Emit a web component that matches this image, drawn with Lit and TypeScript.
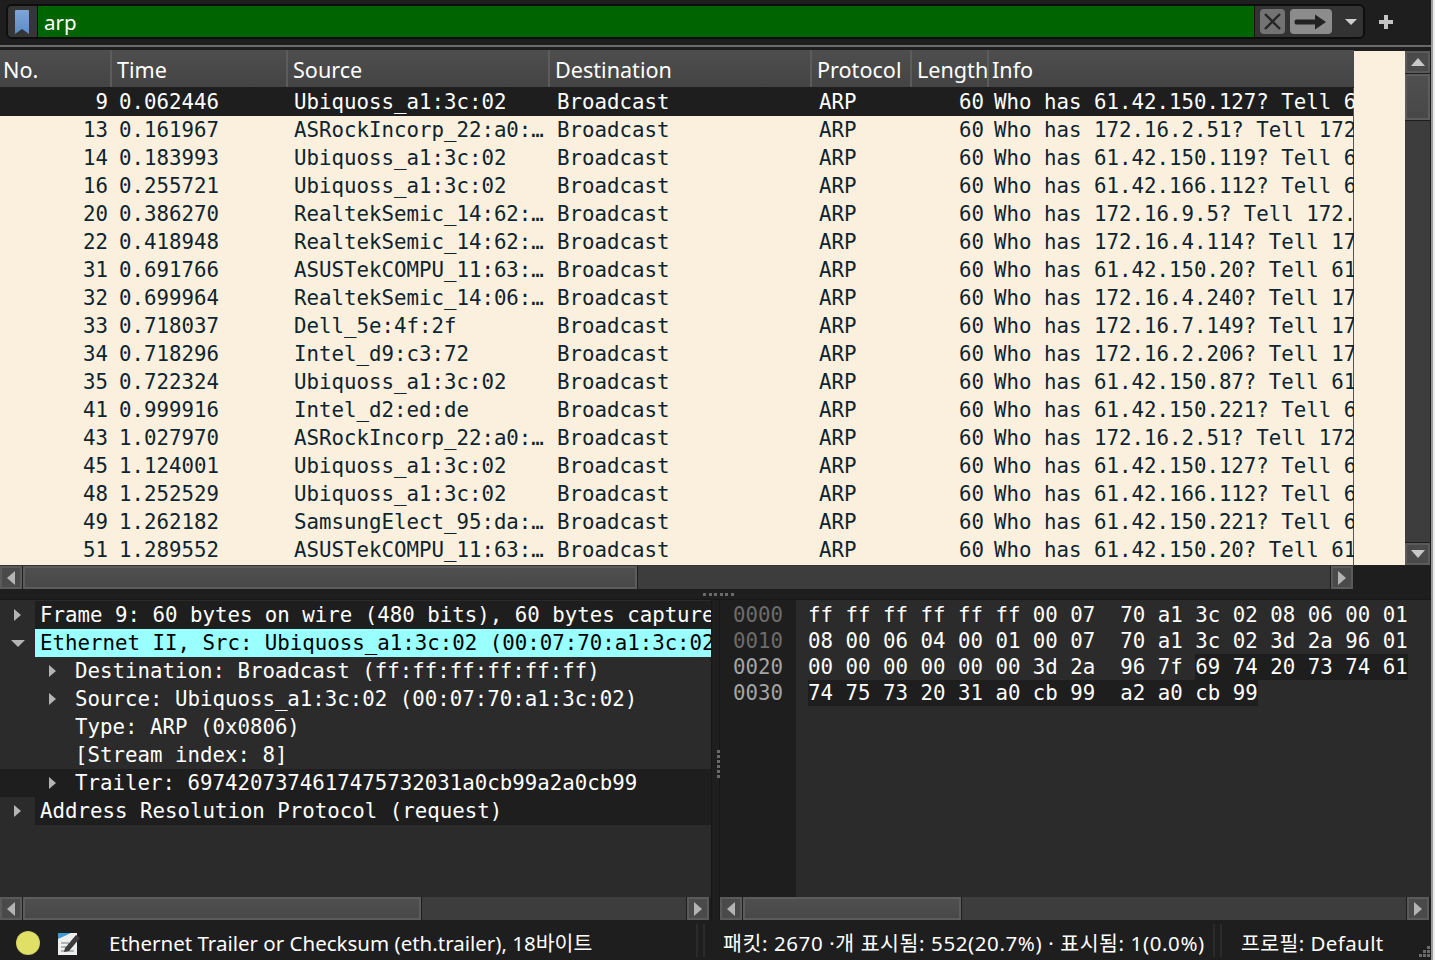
import { LitElement, html, css } from "lit";
import { customElement } from "lit/decorators.js";

const U = "Ubiquoss_a1:3c:02";
const A = "ASRockIncorp_22:a0:…";
const R = "RealtekSemic_14:62:…";
const S = "ASUSTekCOMPU_11:63:…";
const rows: [string, string, string, string][] = [
  ["9", "0.062446", U, "61.42.150.127? Tell 6"],
  ["13", "0.161967", A, "172.16.2.51? Tell 172"],
  ["14", "0.183993", U, "61.42.150.119? Tell 6"],
  ["16", "0.255721", U, "61.42.166.112? Tell 6"],
  ["20", "0.386270", R, "172.16.9.5? Tell 172."],
  ["22", "0.418948", R, "172.16.4.114? Tell 17"],
  ["31", "0.691766", S, "61.42.150.20? Tell 61"],
  ["32", "0.699964", "RealtekSemic_14:06:…", "172.16.4.240? Tell 17"],
  ["33", "0.718037", "Dell_5e:4f:2f", "172.16.7.149? Tell 17"],
  ["34", "0.718296", "Intel_d9:c3:72", "172.16.2.206? Tell 17"],
  ["35", "0.722324", U, "61.42.150.87? Tell 61"],
  ["41", "0.999916", "Intel_d2:ed:de", "61.42.150.221? Tell 6"],
  ["43", "1.027970", A, "172.16.2.51? Tell 172"],
  ["45", "1.124001", U, "61.42.150.127? Tell 6"],
  ["48", "1.252529", U, "61.42.166.112? Tell 6"],
  ["49", "1.262182", "SamsungElect_95:da:…", "61.42.150.221? Tell 6"],
  ["51", "1.289552", S, "61.42.150.20? Tell 61"],
];
const heads = ["No.", "Time", "Source", "Destination", "Protocol", "Length", "Info"];

const hexRows: { off: string; dim: boolean; plain: string; mark: string }[] = [
  { off: "0000", dim: true, plain: "ff ff ff ff ff ff 00 07  70 a1 3c 02 08 06 00 01", mark: "" },
  { off: "0010", dim: true, plain: "08 00 06 04 00 01 00 07  70 a1 3c 02 3d 2a 96 01", mark: "" },
  { off: "0020", dim: false, plain: "00 00 00 00 00 00 3d 2a  96 7f ", mark: "69 74 20 73 74 61" },
  { off: "0030", dim: false, plain: "", mark: "74 75 73 20 31 a0 cb 99  a2 a0 cb 99" },
];

const hbar = (thumb: number, w: number) => html`
  <div class="hbar" style="width:${w}px">
    <div class="sbtn"><span class="tri left"></span></div>
    <div class="thumb" style="width:${thumb}px"></div>
    <div class="track"></div>
    <div class="sbtn"><span class="tri right"></span></div>
  </div>`;

const dots = (cls: string) => html`<div class=${cls}>${[0, 1, 2, 3, 4, 5].map(() => html`<i></i>`)}</div>`;

@customElement("app-root")
export class AppRoot extends LitElement {
  static styles = css`
    :host { display: flex; width: 1435px; height: 960px; overflow: hidden; background: #1e1e1e; color: #fff; font-family: "Noto Sans", "Noto Sans CJK KR", sans-serif; }
    .win { width: 1431px; height: 960px; display: flex; flex-direction: column; background: #1e1e1e; flex: none; }
    .edge { width: 2px; background: #9c9c9c; flex: none; }
    .edge2 { width: 2px; background: #ececec; flex: none; }

    .toolbar { height: 45px; display: flex; align-items: center; padding: 4px 0 6px 6px; box-sizing: border-box; flex: none; }
    .filter { width: 1359px; height: 35px; box-sizing: border-box; border: 2px solid #0e0e0e; border-radius: 6px; display: flex; overflow: hidden; background: #333; flex: none; }
    .bm { width: 29px; display: flex; align-items: center; justify-content: center; background: #363636; padding-right: 2px; box-sizing: border-box; flex: none; }
    .input { flex: 1; background: #006400; border-left: 1px solid #111; border-right: 1px solid #111; font-size: 20.5px; line-height: 32px; padding-left: 6px; color: #fff; }
    .fbtns { width: 108px; display: flex; align-items: center; flex: none; padding-left: 5px; gap: 5px; box-sizing: border-box; }
    .fb { height: 25px; border-radius: 4px; background: #8c8c8c; display: flex; align-items: center; justify-content: center; }
    .fb.x { width: 25px; background: #737373; }
    .fb.go { width: 42px; }
    .caret { width: 0; height: 0; border-left: 6px solid transparent; border-right: 6px solid transparent; border-top: 6px solid #cfcfcf; margin-left: 8px; }
    .plus { margin-left: 13px; width: 16px; height: 16px; display: block; }
    .rule { height: 2px; background: #6a6a6a; flex: none; }
    .gap3 { height: 3px; flex: none; }

    .top { display: grid; grid-template-columns: 1354px 51px 26px; grid-template-rows: 516px 24px; height: 540px; flex: none; }
    .table { display: flex; flex-direction: column; font-family: "DejaVu Sans Mono", monospace; font-size: 20.75px; overflow: hidden; }
    .head, .row { display: grid; flex: none; }
    .row { grid-template-columns: 110px 176px 263px 262px 99px 77px 367px; }
    .head { grid-template-columns: 110px 176px 262px 262px 100px 77px 367px; height: 37px; background: linear-gradient(#4e4e4e, #444); font-family: "Noto Sans", sans-serif; font-size: 21.6px; line-height: 40px; margin-bottom: 1px; }
    .head div { padding-left: 5px; border-left: 2px solid #5c5c5c; box-sizing: border-box; white-space: nowrap; overflow: hidden; }
    .head div:first-child { padding-left: 3px; border-left: 0; }
    .head div:last-child { padding-left: 3px; }
    .rows { flex: 1; background: #faf0dd; border-right: 1px solid #555; border-bottom: 1px solid #333; color: #0e2430; }
    .row { height: 28px; line-height: 28px; white-space: nowrap; }
    .row.sel { background: #1e1e1e; color: #fff; }
    .row div { overflow: hidden; padding-left: 8px; box-sizing: border-box; }
    .row .no { text-align: right; padding: 0 2px 0 0; }
    .row .time { padding-left: 9px; }
    .row .len { text-align: right; padding: 0 3px 0 0; }
    .row .info { padding-left: 7px; }
    .fill { background: #faf0dd; margin-top: 1px; margin-bottom: 1px; }
    .vbar { display: flex; flex-direction: column; width: 25px; margin-top: 1px; margin-bottom: 1px; gap: 1px; }
    .vbar .sbtn { width: 25px; height: 22px; }
    .vbar .thumb { height: 46px; flex: none; }
    .vbar .track { flex: 1; }
    .hbar { display: flex; height: 23px; align-items: stretch; gap: 1px; }
    .sbtn { width: 22px; flex: none; background: #4a4a4a; border: 2px solid #5a5a5a; box-sizing: border-box; display: flex; align-items: center; justify-content: center; }
    .thumb { background: linear-gradient(#4f4f4f, #484848); border: 2px solid #5c5c5c; box-sizing: border-box; flex: none; }
    .track { flex: 1; background: #3d3d3d; }
    .tri { width: 0; height: 0; display: block; }
    .tri.left { border-top: 7px solid transparent; border-bottom: 7px solid transparent; border-right: 8px solid #b4b4b4; }
    .tri.right { border-top: 7px solid transparent; border-bottom: 7px solid transparent; border-left: 8px solid #b4b4b4; }
    .tri.up { border-left: 7px solid transparent; border-right: 7px solid transparent; border-bottom: 8px solid #c8c8c8; }
    .tri.down { border-left: 7px solid transparent; border-right: 7px solid transparent; border-top: 8px solid #c8c8c8; }

    .hsplit { height: 10px; flex: none; display: flex; justify-content: flex-start; align-items: center; padding-left: 703px; box-sizing: border-box; border-bottom: 1px solid #171717; }
    .hdots { display: flex; gap: 2.5px; }
    .hdots i { width: 3px; height: 3px; background: #6a6a6a; display: block; }
    .vdots { display: flex; flex-direction: column; gap: 2px; margin-top: 150px; margin-left: 5px; }
    .vdots i { width: 3px; height: 3px; background: #6a6a6a; display: block; }

    .bottom { display: grid; grid-template-columns: 711px 9px 711px; height: 321px; flex: none; }
    .pane { display: flex; flex-direction: column; }
    .body { height: 297px; background: #2b2b2b; font-family: "DejaVu Sans Mono", monospace; font-size: 20.75px; overflow: hidden; padding-top: 1px; box-sizing: border-box; flex: none; }
    .vsplit { border-left: 1px solid #171717; border-right: 1px solid #171717; box-sizing: border-box; }
    .tr { height: 28px; line-height: 28px; display: flex; white-space: nowrap; overflow: hidden; }
    .arrow { width: 35px; flex: none; display: flex; align-items: center; justify-content: center; }
    .arrow.l1 { width: 70px; padding-left: 35px; box-sizing: border-box; }
    .l1t { margin-left: 70px; padding-left: 5px; }
    .t { flex: 1; padding-left: 5px; overflow: hidden; }
    .t.dark { background: #1e1e1e; }
    .t.sel { background: #99ffff; color: #000; }
    .tr.dark { background: #1e1e1e; }
    .tri.sright { border-top: 6px solid transparent; border-bottom: 6px solid transparent; border-left: 7px solid #b4b4b4; }
    .tri.sdown { border-left: 7px solid transparent; border-right: 7px solid transparent; border-top: 7px solid #b4b4b4; }

    .hexbody { height: 297px; display: flex; font-family: "DejaVu Sans Mono", monospace; font-size: 20.75px; flex: none; }
    .gutter { width: 76px; background: #1e1e1e; padding: 2px 0 0 13px; box-sizing: border-box; flex: none; }
    .off { height: 26px; line-height: 26px; color: #a4a4a4; }
    .off.dim { color: #6c6c6c; }
    .hex { flex: 1; background: #2b2b2b; padding: 2px 0 0 12px; box-sizing: border-box; }
    .hl { height: 26px; line-height: 26px; white-space: pre; }
    .hl span { background: #1e1e1e; display: inline-block; height: 26px; }

    .status { height: 39px; display: flex; align-items: center; font-size: 20.5px; white-space: nowrap; flex: none; padding-top: 4px; box-sizing: border-box; }
    .led { width: 24px; height: 24px; border-radius: 50%; background: radial-gradient(#e0e066 62%, #7d7d35); margin-left: 16px; flex: none; }
    .note { width: 24px; height: 26px; margin-left: 17px; flex: none; display: block; }
    .s1 { margin-left: 28px; width: 587px; flex: none; margin-bottom: 2px; }
    .seps { display: flex; gap: 5px; height: 33px; flex: none; margin-top: -4px; }
    .seps i { width: 2px; background: #2b2b2b; display: block; }
    .s2 { margin-left: 18px; width: 490px; flex: none; letter-spacing: 0.6px; margin-bottom: 2px; }
    .s3 { margin-left: 19px; flex: 1; letter-spacing: 0.4px; margin-bottom: 2px; }
    .grip { width: 16px; height: 16px; align-self: flex-end; display: block; flex: none; }
  `;

  render() {
    return html`
      <div class="win">
        <div class="toolbar">
          <div class="filter">
            <div class="bm">
              <svg width="16" height="26" viewBox="0 0 16 26"><defs><linearGradient id="bk" x1="0" y1="0" x2="0" y2="1"><stop offset="0" stop-color="#7da6d6"/><stop offset="1" stop-color="#5d8cc4"/></linearGradient></defs><path d="M1 2 Q1 1 2 1 H14 Q15 1 15 2 V25 L8 20 L1 25 Z" fill="url(#bk)"/></svg>
            </div>
            <div class="input">arp</div>
            <div class="fbtns">
              <div class="fb x"><svg width="19" height="19" viewBox="0 0 19 19"><path d="M2 2 L17 17 M17 2 L2 17" stroke="#262626" stroke-width="2.4" fill="none"/></svg></div>
              <div class="fb go"><svg width="34" height="18" viewBox="0 0 34 18"><path d="M2 6.5 H21 V1.5 L32 9 L21 16.5 V11.5 H2 Q0.5 11.5 0.5 9 Q0.5 6.5 2 6.5 Z" fill="#222"/></svg></div>
              <div class="caret"></div>
            </div>
          </div>
          <svg class="plus" viewBox="0 0 16 16"><path d="M6 1 H10 V6 H15 V10 H10 V15 H6 V10 H1 V6 H6 Z" fill="#c4c4c4"/></svg>
        </div>
        <div class="rule"></div>
        <div class="gap3"></div>
        <div class="top">
          <div class="table">
            <div class="head">${heads.map((h) => html`<div>${h}</div>`)}</div>
            <div class="rows">
              ${rows.map(
                (r, i) => html`<div class="row ${i === 0 ? "sel" : ""}">
                  <div class="no">${r[0]}</div>
                  <div class="time">${r[1]}</div>
                  <div>${r[2]}</div>
                  <div>Broadcast</div>
                  <div>ARP</div>
                  <div class="len">60</div>
                  <div class="info">Who has ${r[3]}</div>
                </div>`
              )}
            </div>
          </div>
          <div class="fill"></div>
          <div class="vbar">
            <div class="sbtn"><span class="tri up"></span></div>
            <div class="thumb"></div>
            <div class="track"></div>
            <div class="sbtn"><span class="tri down"></span></div>
          </div>
          ${hbar(614, 1353)}
        </div>
        <div class="hsplit">${dots("hdots")}</div>
        <div class="bottom">
          <div class="pane">
            <div class="body">
              <div class="tr"><div class="arrow"><span class="tri sright"></span></div><div class="t dark">Frame 9: 60 bytes on wire (480 bits), 60 bytes capture</div></div>
              <div class="tr"><div class="arrow"><span class="tri sdown"></span></div><div class="t sel">Ethernet II, Src: Ubiquoss_a1:3c:02 (00:07:70:a1:3c:02</div></div>
              <div class="tr"><div class="arrow l1"><span class="tri sright"></span></div><div class="t">Destination: Broadcast (ff:ff:ff:ff:ff:ff)</div></div>
              <div class="tr"><div class="arrow l1"><span class="tri sright"></span></div><div class="t">Source: Ubiquoss_a1:3c:02 (00:07:70:a1:3c:02)</div></div>
              <div class="tr"><div class="t l1t">Type: ARP (0x0806)</div></div>
              <div class="tr"><div class="t l1t">[Stream index: 8]</div></div>
              <div class="tr dark"><div class="arrow l1"><span class="tri sright"></span></div><div class="t">Trailer: 6974207374617475732031a0cb99a2a0cb99</div></div>
              <div class="tr"><div class="arrow"><span class="tri sright"></span></div><div class="t dark">Address Resolution Protocol (request)</div></div>
            </div>
            ${hbar(398, 709)}
          </div>
          <div class="vsplit">${dots("vdots")}</div>
          <div class="pane">
            <div class="hexbody">
              <div class="gutter">${hexRows.map((h) => html`<div class="off ${h.dim ? "dim" : ""}">${h.off}</div>`)}</div>
              <div class="hex">${hexRows.map((h) => html`<div class="hl">${h.plain}${h.mark ? html`<span>${h.mark}</span>` : ""}</div>`)}</div>
            </div>
            ${hbar(218, 709)}
          </div>
        </div>
        <div class="status">
          <div class="led"></div>
          <svg class="note" viewBox="0 0 24 26">
            <path d="M1 3 H20 V25 H1 Z" fill="#eef0f0"/>
            <path d="M1 3 H14 L1 9 Z" fill="#3b9ad8"/>
            <path d="M4 13 H12 M4 17 H9 M4 21 H17" stroke="#9aa0a0" stroke-width="1.5"/>
            <path d="M8 18 L19 5 L23 8 L12 21 L7 22 Z" fill="#3c3c3c"/>
          </svg>
          <div class="s1">Ethernet Trailer or Checksum (eth.trailer), 18바이트</div>
          <div class="seps"><i></i><i></i></div>
          <div class="s2">패킷: 2670 ·개 표시됨: 552(20.7%) · 표시됨: 1(0.0%)</div>
          <div class="seps"><i></i><i></i></div>
          <div class="s3">프로필: Default</div>
          <svg class="grip" viewBox="0 0 16 16"><g fill="#6a6a6a"><rect x="12" y="2" width="3" height="3"/><rect x="8" y="6" width="3" height="3"/><rect x="12" y="6" width="3" height="3"/><rect x="4" y="10" width="3" height="3"/><rect x="8" y="10" width="3" height="3"/><rect x="12" y="10" width="3" height="3"/></g></svg>
        </div>
      </div>
      <div class="edge"></div>
      <div class="edge2"></div>
    `;
  }
}
